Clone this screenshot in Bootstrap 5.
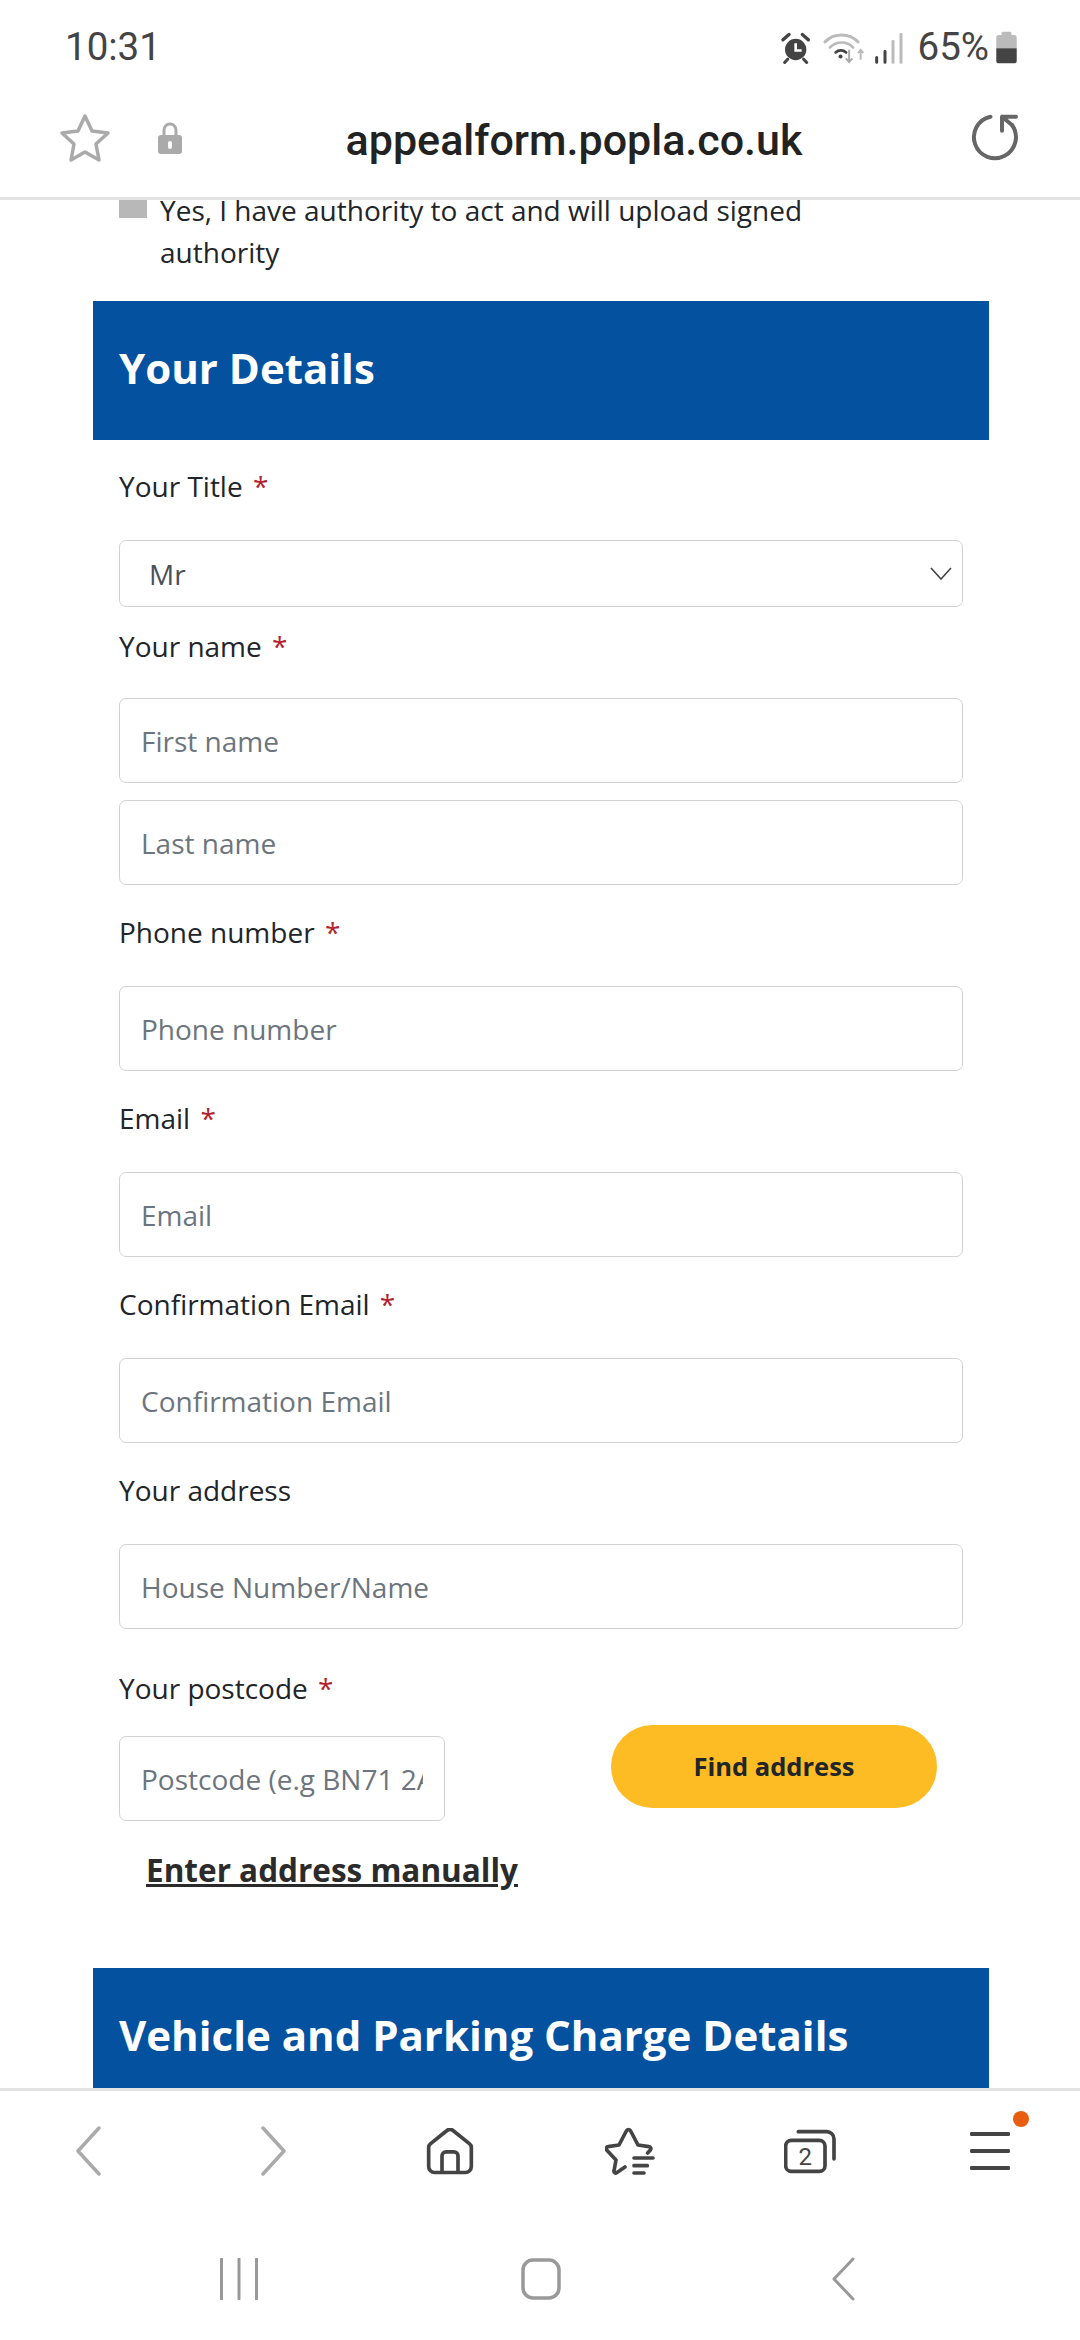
<!DOCTYPE html>
<html lang="en">
<head>
<meta charset="utf-8">
<title>appealform.popla.co.uk</title>
<link rel="stylesheet" href="https://cdn.jsdelivr.net/npm/bootstrap@5.3.0/dist/css/bootstrap.min.css">
<style>
html,body{width:1080px;height:2340px;margin:0;overflow:hidden;background:#fff}
body{font-family:"Open Sans","Liberation Sans",sans-serif;color:#212529}
.shell{height:2340px}
.status-row{height:95px;padding:0 63px 0 65px;font-family:Roboto,"Liberation Sans",sans-serif;font-size:38.500px;color:#444;line-height:1}
.status-pct{margin:0 7px 0 14px}
.st-wifi{margin-left:12px}
.st-signal{margin-left:9px}
.url-row{height:105px;border-bottom:3px solid #e4e4e4;font-family:Roboto,"Liberation Sans",sans-serif;padding:0 58px 12px 59px}
.url-text{font-size:43px;font-weight:500;color:#222;flex:1;text-align:center;padding-right:4px}
.url-ic{margin-top:-5px}
.lock-icon{margin-left:47px}
.page-area{flex:1 1 0;min-height:0;overflow:hidden}
.page-inner{margin-top:-11px}
.auth-row{padding-left:119px;padding-right:260px;font-size:28px;line-height:42px}
.auth-box{flex:0 0 28px;width:28px;height:29px;background:#b8b8b8;margin-right:13px}
.band{margin:0 91px 0 93px;background:#03519f;color:#fff;font-weight:700;font-size:42px;padding-left:26px;height:139px;line-height:133px}
.band-first{margin-top:28px}
.band-second{margin-top:77px}
.form-area{padding:25px 117px 0 119px}
.fld-label{font-size:28px;line-height:42px;margin-bottom:33px;display:block}
.fld-label-tight{margin-bottom:31px}
.fld-label-post{margin-bottom:27px}
.fld-req{color:#b3232d;margin-left:3px}
.fld-input{height:85px;font-size:28px;padding:0 21px;color:#495057;border-color:#d0d3d6;border-radius:7px;margin-bottom:26px}
.fld-input::placeholder{color:#6c757d;opacity:1}
.fld-stack{margin-bottom:17px}
.fld-address{margin-bottom:38px}
.fld-select{height:67px;font-size:28px;padding:0 0 0 29px;color:#495057;border-color:#d0d3d6;border-radius:7px;margin-bottom:18px;background-size:22px 13px;background-position:right 10px center;background-image:url("data:image/svg+xml,%3csvg xmlns='http://www.w3.org/2000/svg' viewBox='0 0 22 13'%3e%3cpath fill='none' stroke='%23444' stroke-width='1.6' d='M1 1l10 11L21 1'/%3e%3c/svg%3e")}
.post-input{width:326px;flex:0 0 326px;margin-bottom:0}
.find-btn{width:326px;height:83px;margin:-11px 0 0 166px;background:#fdbb24;border:0;border-radius:42px;font-size:25.500px;font-weight:700;color:#212529}
.manual-link{display:block;width:max-content;margin:28px 0 0 27px;font-size:31.500px;font-weight:700;line-height:42px;color:#2b2b2b;text-decoration:underline}
.tool-row{height:162px;border-top:3px solid #e4e4e4;padding-bottom:39px}
.chev-back{margin-right:4px}
.chev-fwd{margin-left:7px}
.dot-badge{position:absolute;left:43px;top:-21px;width:16px;height:16px;border-radius:50%;background:#e85d10}
.nav-row{height:90px;padding:0 139px 32px 140px}
.nav-row>div{width:197px}
</style>
</head>
<body>
<div class="shell d-flex flex-column">
  <div class="status-row d-flex align-items-center justify-content-between">
    <span>10:31</span>
    <div class="d-flex align-items-center">
      <svg width="30" height="32" viewBox="28 35 90 95"><circle cx="72" cy="87" r="32" fill="#444"/><path d="M34 58 52 42M110 58 92 42" stroke="#444" stroke-width="10" stroke-linecap="round" fill="none"/><path d="M48 116l-9 10M96 116l9 10" stroke="#444" stroke-width="9" stroke-linecap="round" fill="none"/><path d="M72 68v22h18" stroke="#fff" stroke-width="8" fill="none"/></svg>
      <svg class="st-wifi" width="42" height="33" viewBox="160 35 125 100"><path d="M165 68a70 70 0 0 1 100 0" stroke="#bbb" stroke-width="9" stroke-linecap="round" fill="none"/><path d="M180 85a48 48 0 0 1 70 0" stroke="#bbb" stroke-width="8" stroke-linecap="round" fill="none"/><path d="M197 100a24 24 0 0 1 32 0" stroke="#444" stroke-width="8" stroke-linecap="round" fill="none"/><circle cx="212" cy="112" r="6" fill="#444"/><path d="M238 92v36M228 118l10 11 10-11" stroke="#aaa" stroke-width="6" fill="none"/><path d="M273 122V92M265 102l8-10 8 10" stroke="#bbb" stroke-width="6" fill="none"/></svg>
      <svg class="st-signal" width="30" height="32" viewBox="310 35 90 95"><path d="M318 125v-14M343 125V92" stroke="#444" stroke-width="9" stroke-linecap="round"/><path d="M367 125V62M391 125V41" stroke="#bbb" stroke-width="9" stroke-linecap="round"/></svg>
      <span class="status-pct">65%</span>
      <svg width="21" height="33" viewBox="676 32 62 100"><path d="M676 84V52a8 8 0 0 1 8-8h8v-5a5 5 0 0 1 5-5h20a5 5 0 0 1 5 5v5h8a8 8 0 0 1 8 8v32z" fill="#bbb"/><path d="M676 84h62v38a8 8 0 0 1-8 8h-46a8 8 0 0 1-8-8z" fill="#444"/></svg>
    </div>
  </div>
  <div class="url-row d-flex align-items-center">
    <svg class="url-ic" width="52" height="50" viewBox="0 0 52 50"><path d="M26 3l7 15 16 2-12 11 3 16-14-8-14 8 3-16L3 20l16-2z" fill="none" stroke="#aaa" stroke-width="3.5" stroke-linejoin="round"/></svg>
    <svg class="lock-icon url-ic" width="24" height="32" viewBox="0 0 24 32"><path d="M6 14V8a6 6 0 0 1 12 0v6" fill="none" stroke="#aaa" stroke-width="3"/><rect y="13" width="24" height="19" rx="3" fill="#aaa"/><rect x="10" y="19" width="4" height="8" rx="2" fill="#fff"/></svg>
    <div class="url-text">appealform.popla.co.uk</div>
    <svg class="url-ic" width="52" height="52" viewBox="20 12 52 52"><path d="M40.500 16.700A21 21 0 1 0 62 25" fill="none" stroke="#666" stroke-width="4" stroke-linecap="round"/><path d="M66 16.700H52v14M52 16.700 62 25" fill="none" stroke="#666" stroke-width="4" stroke-linecap="round" stroke-linejoin="round"/></svg>
  </div>

  <div class="page-area">
    <div class="page-inner">
      <div class="auth-row d-flex">
        <span class="auth-box"></span>
        <span>Yes, I have authority to act and will upload signed authority</span>
      </div>
      <div class="band band-first">Your Details</div>
      <form class="form-area">
        <label class="fld-label">Your Title <span class="fld-req">*</span></label>
        <select class="form-select fld-select"><option>Mr</option></select>
        <label class="fld-label fld-label-tight">Your name <span class="fld-req">*</span></label>
        <input class="form-control fld-input fld-stack" placeholder="First name">
        <input class="form-control fld-input" placeholder="Last name">
        <label class="fld-label">Phone number <span class="fld-req">*</span></label>
        <input class="form-control fld-input" placeholder="Phone number">
        <label class="fld-label">Email <span class="fld-req">*</span></label>
        <input class="form-control fld-input" placeholder="Email">
        <label class="fld-label">Confirmation Email <span class="fld-req">*</span></label>
        <input class="form-control fld-input" placeholder="Confirmation Email">
        <label class="fld-label">Your address</label>
        <input class="form-control fld-input fld-address" placeholder="House Number/Name">
        <label class="fld-label fld-label-post">Your postcode <span class="fld-req">*</span></label>
        <div class="d-flex align-items-start">
          <input class="form-control fld-input post-input" placeholder="Postcode (e.g BN71 2AB)">
          <button type="button" class="btn find-btn">Find address</button>
        </div>
        <a class="manual-link" href="#">Enter address manually</a>
      </form>
      <div class="band band-second">Vehicle and Parking Charge Details</div>
    </div>
  </div>

  <div class="tool-row row g-0 align-items-center">
    <div class="col-2 d-flex justify-content-center"><svg class="chev-back" width="28" height="50" viewBox="0 0 28 50"><path d="M25 2 4 25l21 23" fill="none" stroke="#aaa" stroke-width="3.5" stroke-linecap="round" stroke-linejoin="round"/></svg></div>
    <div class="col-2 d-flex justify-content-center"><svg class="chev-fwd" width="28" height="50" viewBox="0 0 28 50"><path d="M3 2l21 23L3 48" fill="none" stroke="#aaa" stroke-width="3.5" stroke-linecap="round" stroke-linejoin="round"/></svg></div>
    <div class="col-2 d-flex justify-content-center"><svg width="48" height="47" viewBox="50 55 144 140"><path d="M58 112a14 14 0 0 1 5-10l50-40a14 14 0 0 1 18 0l50 40a14 14 0 0 1 5 10v58a18 18 0 0 1-18 18H76a18 18 0 0 1-18-18z" fill="none" stroke="#444" stroke-width="11" stroke-linejoin="round"/><path d="M98 188v-50a12 12 0 0 1 12-12h24a12 12 0 0 1 12 12v50" fill="none" stroke="#444" stroke-width="11"/></svg></div>
    <div class="col-2 d-flex justify-content-center"><svg width="50" height="49" viewBox="588 52 150 147"><path d="M648 172l-25 17a5 5 0 0 1-8-5l6-33-28-30a6 6 0 0 1 4-10l33-5 22-42a7 7 0 0 1 13 0l22 42 33 5a6 6 0 0 1 4 10l-8 9" fill="none" stroke="#444" stroke-width="11" stroke-linejoin="round" stroke-linecap="round"/><path d="M675 145h57M675 168h40M675 190h30" stroke="#444" stroke-width="11" stroke-linecap="round"/></svg></div>
    <div class="col-2 d-flex justify-content-center"><svg width="52" height="45" viewBox="42 87 156 133"><rect x="47" y="120" width="118" height="93" rx="17" fill="none" stroke="#444" stroke-width="11"/><path d="M85 94h85a22 22 0 0 1 22 22v60" fill="none" stroke="#444" stroke-width="11" stroke-linecap="round"/><text x="106" y="193" text-anchor="middle" font-family="Roboto,sans-serif" font-size="72" fill="#444">2</text></svg></div>
    <div class="col-2 d-flex justify-content-center"><div class="position-relative"><svg class="d-block" width="40" height="38" viewBox="0 0 40 38"><path d="M1.500 2h37M1.500 19h37M1.500 36h37" stroke="#444" stroke-width="3.800" stroke-linecap="round"/></svg><span class="dot-badge"></span></div></div>
  </div>
  <div class="nav-row d-flex align-items-center justify-content-between">
    <div class="d-flex justify-content-center"><svg width="40" height="42" viewBox="0 0 40 42"><path d="M2.500 1v40M20 1v40M37.500 1v40" stroke="#999" stroke-width="3" stroke-linecap="round"/></svg></div>
    <div class="d-flex justify-content-center"><svg width="40" height="42" viewBox="0 0 40 42"><rect x="2" y="2" width="36" height="38" rx="10" fill="none" stroke="#999" stroke-width="3.5"/></svg></div>
    <div class="d-flex justify-content-center"><svg width="24" height="44" viewBox="0 0 24 44"><path d="M22 2 3 22l19 20" fill="none" stroke="#999" stroke-width="3" stroke-linecap="round" stroke-linejoin="round"/></svg></div>
  </div>
</div>
</body>
</html>
